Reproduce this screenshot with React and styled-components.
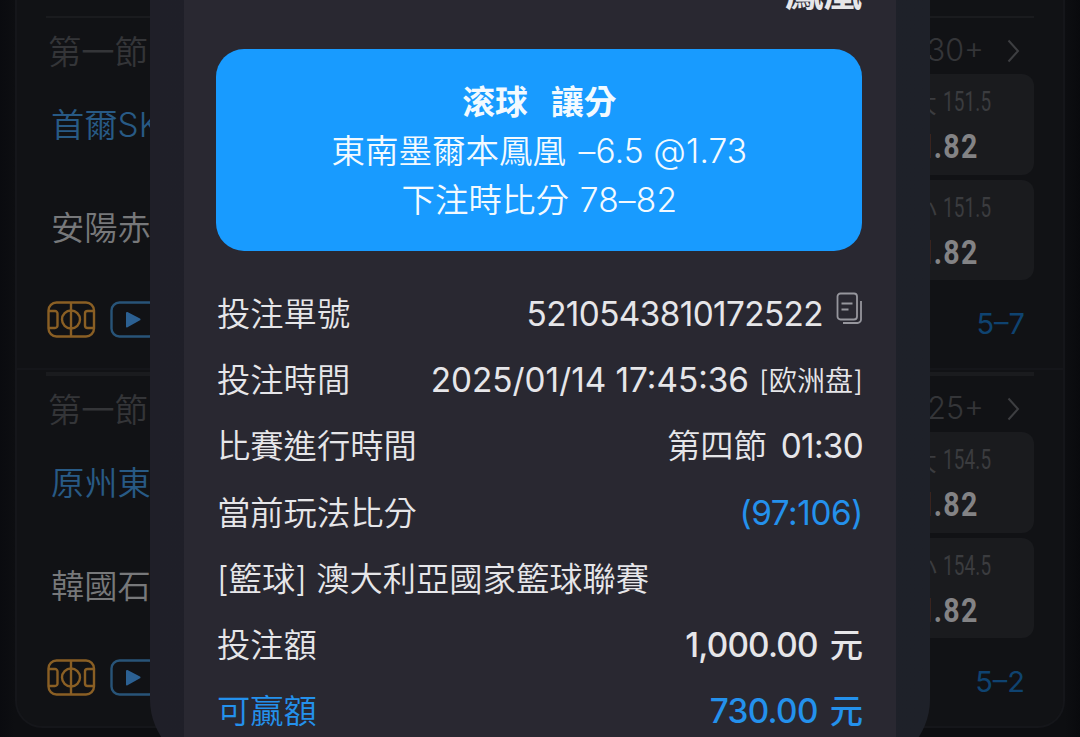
import React from 'react'
import styled, { createGlobalStyle } from 'styled-components'

const GlobalStyle = createGlobalStyle`
  * { box-sizing: border-box; }
  body {
    margin: 0;
    background: #0b0c10;
    overflow: hidden;
    font-family: Inter, 'Noto Sans CJK TC', sans-serif;
    font-size: 33.3px;
    font-weight: 350;
  }
`

const Page = styled.div`
  position: relative;
  width: 1080px;
  height: 737px;
  padding: 0 15px;
  overflow: hidden;
  background: linear-gradient(90deg, #0a0b0f 0, #0d0e11 15px, #0d0e11 1065px, #090a0d 1080px);
`

/* ---------- match list ---------- */

const List = styled.div`
  height: 728px;
  padding-top: 16px;
  border: 2px solid #15161a;
  border-top: 0;
  border-radius: 0 0 27px 27px;
  background: #111215;
`

const Match = styled.section`
  height: 358px;
  padding: 0 29px;
`

const MatchLine = styled.div`
  height: ${props => props.$wide ? '4px' : '2px'};
  margin-top: ${props => props.$wide ? '-2px' : '0'};
  background: #1a1b1e;
`

const MatchHead = styled.div`
  display: flex;
  align-items: center;
  justify-content: space-between;
  height: 56px;
  padding: 7px 14px 0 2px;
  color: #343538;
`

const MoreCount = styled.div`
  display: flex;
  align-items: center;
  gap: 23px;
  font-size: 30.5px;
  font-weight: 300;
  line-height: 40px;
  svg { margin-top: 3px; }
`

const MatchBody = styled.div`
  display: flex;
  justify-content: space-between;
  height: 206px;
`

const Teams = styled.div`
  display: grid;
  grid-template-rows: 103px 103px;
  padding-left: 5px;
`

const Team = styled.div`
  display: flex;
  align-items: center;
  padding-bottom: 6px;
  color: ${props => props.$home ? '#285a85' : '#77787a'};
`

const OddsList = styled.div`
  display: grid;
  grid-template-rows: 101px 100px;
  gap: 5px;
  width: 190px;
`

const OddsBox = styled.div`
  display: flex;
  flex-direction: column;
  align-items: flex-end;
  border-radius: 12px;
  background: #1a1b1e;
`

const Handicap = styled.div`
  display: flex;
  align-items: center;
  gap: 6px;
  height: 55px;
  padding-right: ${props => props.$wide ? '42px' : '44px'};
  color: #3b3c3f;
  font-size: 27px;
`

const Narrow = styled.span`
  font-family: Roboto, sans-serif;
  font-size: 27px;
  font-weight: 400;
  letter-spacing: 0.2px;
  width: ${props => props.$wide ? '49px' : '47px'};
  transform: scaleX(0.7);
  transform-origin: left;
  white-space: nowrap;
`

const Price = styled.div`
  width: 100px;
  height: 38px;
  padding-left: 3.4px;
  color: #838385;
  font-family: Roboto, sans-serif;
  font-size: 34px;
  font-weight: 700;
  line-height: 34px;
  letter-spacing: 1.6px;
  transform: scaleX(0.84);
  transform-origin: left;
  margin-right: 18px;
`

const Whole = styled.span`
  letter-spacing: -1.8px;
`

const MatchFoot = styled.div`
  display: flex;
  align-items: flex-start;
  justify-content: space-between;
  height: 88px;
  padding: 21px 9px 0 1px;
`

const FootIcons = styled.div`
  display: flex;
  gap: 14px;
`

const Score = styled.div`
  color: #0f4370;
  font-size: 29px;
  font-weight: 400;
  line-height: 45px;
`

const CardEdge = styled.div`
  height: 2px;
  margin: 0 -29px;
  background: #15161a;
`

/* ---------- slip ---------- */

const Modal = styled.main`
  position: absolute;
  left: 150px;
  top: 0;
  width: 780px;
  height: 769px;
  padding: 0 34px;
  border-radius: 0 0 70px 70px;
  background: linear-gradient(90deg, #1f1f28, #1e2129);
`

const Slip = styled.div`
  height: 737px;
  padding: 0 33px;
  background: #292831;
  color: #e6e6e9;
`

const TeamName = styled.div`
  display: flex;
  align-items: flex-end;
  justify-content: flex-end;
  height: 49px;
  padding: 0 1px 29px 0;
  font-size: 38.5px;
  font-weight: 700;
  line-height: 56px;
`

const Summary = styled.div`
  display: flex;
  flex-direction: column;
  align-items: center;
  width: 646px;
  height: 202px;
  margin-left: -0.6px;
  padding: 29px 0 0;
  border-radius: 28px;
  background: #189bff;
  color: #f3faff;
`

const SummaryLine = styled.div`
  height: 49px;
  line-height: 49px;
  font-size: ${props => props.$bold ? '32.8px' : '33.5px'};
  font-weight: ${props => props.$bold ? 700 : 350};
  white-space: pre;
`

const Figures = styled.span`
  margin-left: ${props => props.$gap || 0}px;
  font-weight: ${props => props.$weight || 400};
  letter-spacing: ${props => props.$spacing || 0}px;
`

const Rows = styled.div`
  padding-top: 30px;
`

const Row = styled.div`
  display: flex;
  align-items: center;
  justify-content: space-between;
  height: 66.2px;
  color: ${props => props.$blue ? '#2491ec' : 'inherit'};
  line-height: 50px;
  white-space: pre;
`

const Label = styled.div`
  color: inherit;
`

const Value = styled.div`
  display: flex;
  align-items: center;
  color: ${props => props.$blue ? '#2491ec' : 'inherit'};
  font-weight: ${props => props.$strong ? 500 : 350};
`

const Market = styled.span`
  margin-left: 10px;
  padding-top: 2px;
  font-size: 28px;
  letter-spacing: 0.1px;
`

const Unit = styled.span`
  margin-left: 12px;
`

const CopyIcon = styled.svg`
  margin: -12px 0 0 13px;
`

function Arrow() {
  return (
    <svg width="13" height="24" viewBox="0 0 13 24" fill="none" stroke="#3d3e41" strokeWidth="2">
      <path d="M1.5 1.5 L11 12 L1.5 22.5" />
    </svg>
  )
}

function CourtIcon() {
  return (
    <svg width="49" height="37" viewBox="0 0 49 37" fill="none" stroke="#8a5f24" strokeWidth="2.4">
      <rect x="1.5" y="1.5" width="45.5" height="34" rx="8" />
      <path d="M24 1.5V35.5" />
      <circle cx="24" cy="18.5" r="9" />
      <path d="M2 10H8A2.5 2.5 0 0 1 10.5 12.5V24.5A2.5 2.5 0 0 1 8 27H2" />
      <path d="M46.5 10H40.5A2.5 2.5 0 0 0 38 12.5V24.5A2.5 2.5 0 0 0 40.5 27H46.5" />
    </svg>
  )
}

function PlayIcon() {
  return (
    <svg width="49" height="37" viewBox="0 0 49 37" fill="none">
      <rect x="1.5" y="1.5" width="46" height="34" rx="8" stroke="#285478" strokeWidth="2.4" />
      <path d="M17 12L29.5 18.5L17 25.5Z" fill="#2c6193" stroke="#2c6193" strokeWidth="2" strokeLinejoin="round" />
    </svg>
  )
}

const matches = [
  { home: '首爾SK', away: '安陽赤', more: '30+', total: '151.5', score: '5–7' },
  { home: '原州東', away: '韓國石', more: '25+', total: '154.5', score: '5–2', wide: true }
]

function MatchItem({ match }) {
  return (
    <Match>
      <MatchLine $wide={match.wide} />
      <MatchHead>
        <div>第一節</div>
        <MoreCount>{match.more}<Arrow /></MoreCount>
      </MatchHead>
      <MatchBody>
        <Teams>
          <Team $home>{match.home}</Team>
          <Team>{match.away}</Team>
        </Teams>
        <OddsList>
          {['大', '小'].map(side => (
            <OddsBox key={side}>
              <Handicap $wide={match.wide}>
                {side}
                <Narrow $wide={match.wide}>{match.total}</Narrow>
              </Handicap>
              <Price><Whole>1</Whole>.82</Price>
            </OddsBox>
          ))}
        </OddsList>
      </MatchBody>
      <MatchFoot>
        <FootIcons>
          <CourtIcon />
          <PlayIcon />
        </FootIcons>
        <Score>{match.score}</Score>
      </MatchFoot>
      {match.wide ? null : <CardEdge />}
    </Match>
  )
}

function App() {
  return (
    <>
      <GlobalStyle />
      <Page lang="zh-Hant">
        <List>
          {matches.map(match => <MatchItem key={match.home} match={match} />)}
        </List>

        <Modal>
          <Slip>
            <TeamName>鳳凰</TeamName>
            <Summary>
              <SummaryLine $bold>滚球   讓分</SummaryLine>
              <SummaryLine>東南墨爾本鳳凰<Figures $gap={3} $weight={300} $spacing={0.15}> –6.5 @1.73</Figures></SummaryLine>
              <SummaryLine>下注時比分<Figures $gap={1} $weight={300} $spacing={0.2}> 78–82</Figures></SummaryLine>
            </Summary>
            <Rows>
              <Row>
                <Label>投注單號</Label>
                <Value>
                  <Figures $spacing={-0.6}>5210543810172522</Figures>
                  <CopyIcon width="27" height="33" viewBox="0 0 27 33" fill="none" stroke="#96969d" strokeWidth="1.8">
                    <rect x="1.5" y="1.5" width="19.5" height="26" rx="3" />
                    <path d="M5.5 11.5H16.5M5.5 17.5H12.5" />
                    <path d="M25 9V27.5A3.5 3.5 0 0 1 21.5 31H7" />
                  </CopyIcon>
                </Value>
              </Row>
              <Row>
                <Label>投注時間</Label>
                <Value><Figures>2025/01/14 17:45:36</Figures><Market>[欧洲盘]</Market></Value>
              </Row>
              <Row>
                <Label>比賽進行時間</Label>
                <Value>第四節<Figures $gap={14} $spacing={-0.7}>01:30</Figures></Value>
              </Row>
              <Row>
                <Label>當前玩法比分</Label>
                <Value $blue><Figures $spacing={-0.4}>(97:106)</Figures></Value>
              </Row>
              <Row>
                <Label>[籃球] 澳大利亞國家籃球聯賽</Label>
              </Row>
              <Row>
                <Label>投注額</Label>
                <Value $strong><Figures $weight={500} $spacing={-0.8}>1,000.00</Figures><Unit>元</Unit></Value>
              </Row>
              <Row $blue>
                <Label>可贏額</Label>
                <Value $strong><Figures $weight={500} $spacing={-0.7}>730.00</Figures><Unit>元</Unit></Value>
              </Row>
            </Rows>
          </Slip>
        </Modal>
      </Page>
    </>
  )
}

export default App
